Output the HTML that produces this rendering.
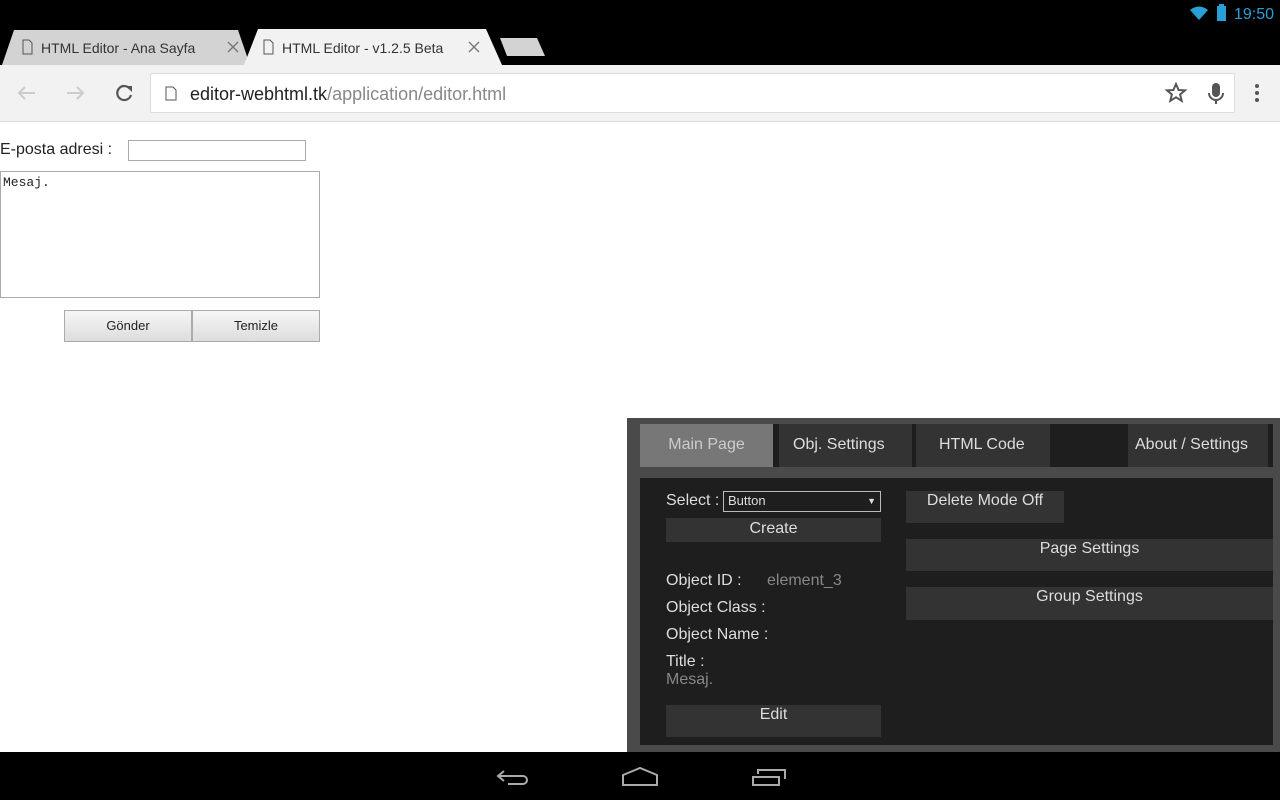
<!DOCTYPE html>
<html><head><meta charset="utf-8"><style>
*{margin:0;padding:0;box-sizing:border-box}
body{width:1280px;height:800px;overflow:hidden;background:#fff;font-family:"Liberation Sans",sans-serif;position:relative}
.abs{position:absolute}
.dk{color:#ddd;font-size:16px}
.btn{position:absolute;background:#333;color:#ddd;font-size:16px;text-align:center}
</style></head><body>
<div class="abs" style="left:0;top:0;width:1280px;height:65px;background:#000"></div>
<svg class="abs" style="left:1188px;top:4px" width="90" height="18">
<path d="M2 6 Q11 -1 20 6 L11 16 Z" fill="#2a9fd6"/>
<rect x="29" y="2" width="9" height="15" fill="#2a9fd6"/><rect x="31" y="0" width="5" height="3" fill="#2a9fd6"/>
<text x="46" y="15" font-family="Liberation Sans" font-size="16" fill="#2a9fd6">19:50</text></svg>
<svg class="abs" style="left:0;top:28px" width="560" height="38">
<path d="M2 37 L14 2 L238 2 L250 37 Z" fill="#d3d3d3"/>
<path d="M244 37 L258 1 L486 1 L502 37 Z" fill="#f2f2f2"/>
<path d="M500 10 L537 10 L545 28 L507 28 Z" fill="#d3d3d3"/>
<path d="M23 12h6l3 3v11h-9z" fill="none" stroke="#555"/>
<path d="M264 12h6l3 3v11h-9z" fill="none" stroke="#555"/>
<path d="M228 14l10 10M238 14l-10 10M469 14l10 10M479 14l-10 10" stroke="#777" stroke-width="1.4"/>
<text x="41" y="25" font-family="Liberation Sans" font-size="14" fill="#333">HTML Editor - Ana Sayfa</text>
<text x="282" y="25" font-family="Liberation Sans" font-size="14" fill="#333">HTML Editor - v1.2.5 Beta</text>
</svg>
<div class="abs" style="left:0;top:65px;width:1280px;height:57px;background:#f2f2f2;border-bottom:1px solid #ddd"></div>
<div class="abs" style="left:150px;top:73px;width:1085px;height:40px;background:#fff;border:1px solid #ddd;border-radius:2px"></div>
<svg class="abs" style="left:0;top:65px" width="1280" height="57">
<path d="M35 28H19M25 22l-6 6 6 6" stroke="#ccc" stroke-width="2" fill="none"/>
<path d="M67 28h16M77 22l6 6-6 6" stroke="#ccc" stroke-width="2" fill="none"/>
<path d="M130 24a7 7 0 1 0 1 6" stroke="#555" stroke-width="2.2" fill="none"/><path d="M126 21h6v6z" fill="#555"/>
<path d="M166 22h7l3 3v10h-10z" fill="none" stroke="#555"/>
<path d="M1176 19l2.6 6 6.4.4-4.9 4.1 1.6 6.3-5.7-3.5-5.7 3.5 1.6-6.3-4.9-4.1 6.4-.4z" fill="none" stroke="#555" stroke-width="2"/>
<rect x="1212" y="18" width="8" height="14" rx="4" fill="#555"/><path d="M1209 28a7 7 0 0 0 14 0M1216 35v4" stroke="#555" stroke-width="2" fill="none"/>
<circle cx="1257" cy="21" r="2" fill="#555"/><circle cx="1257" cy="28" r="2" fill="#555"/><circle cx="1257" cy="35" r="2" fill="#555"/>
<text x="190" y="35" font-family="Liberation Sans" font-size="18" fill="#222">editor-webhtml.tk<tspan fill="#888">/application/editor.html</tspan></text>
</svg>
<div class="abs" style="left:0;top:141px;font-size:16px;color:#222">E-posta adresi :</div>
<div class="abs" style="left:128px;top:140px;width:178px;height:21px;border:1px solid #aaa"></div>
<div class="abs" style="left:0;top:171px;width:320px;height:127px;border:1px solid #aaa;font-family:'Liberation Mono',monospace;font-size:13px;padding:3px 2px;color:#222">Mesaj.</div>
<div class="abs" style="left:64px;top:310px;width:128px;height:32px;border:1px solid #aaa;background:linear-gradient(#f6f6f6,#ddd);font-size:13px;text-align:center;line-height:30px;color:#222">Gönder</div>
<div class="abs" style="left:192px;top:310px;width:128px;height:32px;border:1px solid #aaa;background:linear-gradient(#f6f6f6,#ddd);font-size:13px;text-align:center;line-height:30px;color:#222">Temizle</div>

<div class="abs" style="left:627px;top:418px;width:653px;height:334px;background:#4a4a4a"></div>
<div class="abs" style="left:640px;top:424px;width:633px;height:43px;background:#1e1e1e"></div>
<div class="btn" style="left:640px;top:424px;width:133px;height:43px;background:#777;color:#ccc;line-height:42px">Main Page</div>
<div class="btn" style="left:779px;top:424px;width:133px;height:43px;line-height:42px;text-align:left;padding-left:14px">Obj. Settings</div>
<div class="btn" style="left:916px;top:424px;width:134px;height:43px;line-height:42px;text-align:left;padding-left:23px">HTML Code</div>
<div class="btn" style="left:1128px;top:424px;width:140px;height:43px;line-height:42px;text-align:left;padding-left:7px">About / Settings</div>
<div class="abs" style="left:640px;top:478px;width:633px;height:267px;background:#1e1e1e"></div>
<div class="abs dk" style="left:666px;top:492px">Select :</div>
<div class="abs" style="left:723px;top:491px;width:158px;height:21px;border:1px solid #bbb;color:#ddd;font-size:13px;padding:1px 4px">Button<span style="float:right;font-size:9px;margin-top:3px">▼</span></div>
<div class="btn" style="left:666px;top:518px;width:215px;height:24px;line-height:22px">Create</div>
<div class="abs dk" style="left:666px;top:572px">Object ID :</div>
<div class="abs" style="left:767px;top:572px;font-size:16px;color:#888">element_3</div>
<div class="abs dk" style="left:666px;top:599px">Object Class :</div>
<div class="abs dk" style="left:666px;top:626px">Object Name :</div>
<div class="abs dk" style="left:666px;top:653px">Title :</div>
<div class="abs" style="left:666px;top:671px;font-size:16px;color:#888">Mesaj.</div>
<div class="btn" style="left:666px;top:705px;width:215px;height:32px;line-height:20px">Edit</div>
<div class="btn" style="left:906px;top:491px;width:158px;height:32px;line-height:20px">Delete Mode Off</div>
<div class="btn" style="left:906px;top:539px;width:367px;height:32px;line-height:20px">Page Settings</div>
<div class="btn" style="left:906px;top:587px;width:367px;height:33px;line-height:20px">Group Settings</div>

<div class="abs" style="left:0;top:752px;width:1280px;height:48px;background:#000"></div>
<svg class="abs" style="left:440px;top:752px" width="400" height="48">
<path d="M64 19l-6 5 6 5M58 24h25a4 4 0 0 1 0 8H68" stroke="#aaa" stroke-width="2" fill="none"/>
<path d="M183 33V23l17-7 17 7v10z" stroke="#aaa" stroke-width="2" fill="none"/>
<rect x="313" y="25" width="26" height="8" stroke="#aaa" stroke-width="2" fill="none"/>
<path d="M318 22V18h27v9" stroke="#aaa" stroke-width="2" fill="none"/>
</svg>
</body></html>
